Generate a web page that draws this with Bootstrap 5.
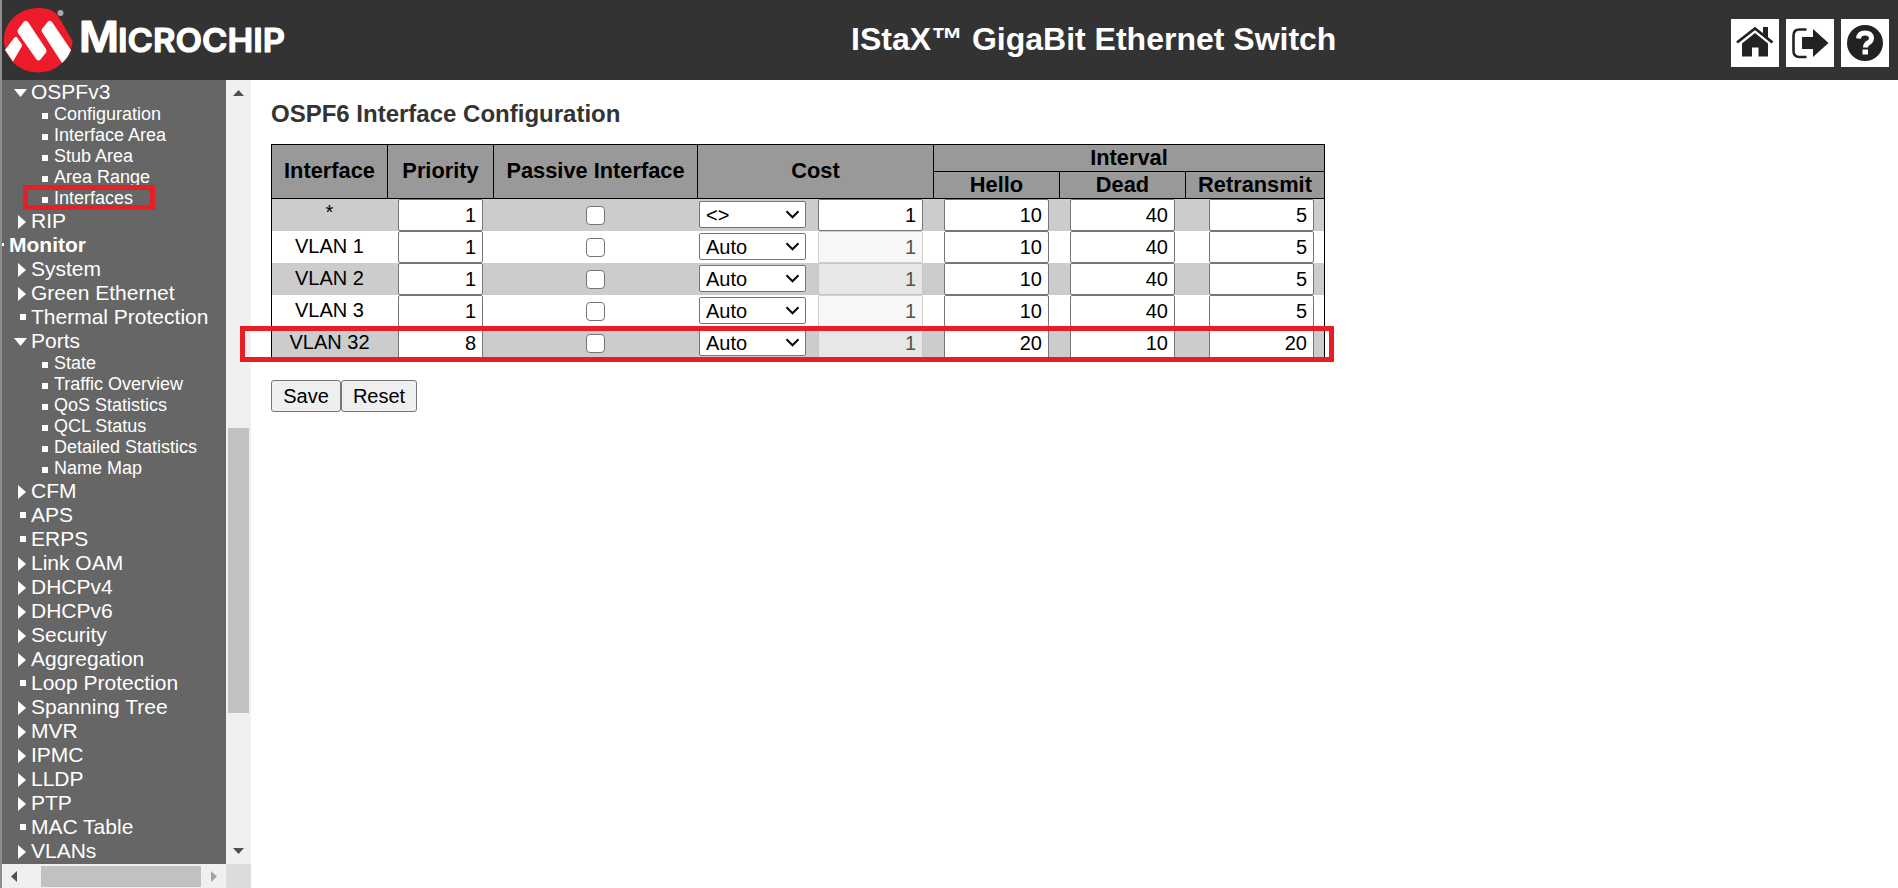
<!DOCTYPE html>
<html lang="en">
<head>
<meta charset="utf-8">
<title>IStaX GigaBit Ethernet Switch</title>
<link href="https://cdn.jsdelivr.net/npm/bootstrap@5.3.0/dist/css/bootstrap.min.css" rel="stylesheet">
<style>
body{font-family:"Liberation Sans",Arial,sans-serif;background:#fff;color:#000;font-size:20px;line-height:24px;border-left:2px solid #8d8d8d}
.topbar{height:80px;background:#333;padding-right:9px}
.topbar h1{font-size:32px;line-height:36px;margin:0 auto 0 0;padding-left:564px;padding-bottom:2px}
.tool{width:48px;height:48px;background:#fff;margin-top:6px}
.side{width:224px}
.menu{height:784px;background:#666;color:#fff;font-size:21px;line-height:24px}
.menu li{height:24px;white-space:nowrap;padding-left:29px;position:relative}
.menu li.top{padding-left:7px}
.menu li.sub{height:21px;line-height:21px;font-size:18px;padding-left:52px}
.menu li::before{content:"";position:absolute;background:#fff}
.menu li.more::before{left:16px;top:6px;width:8px;height:14px;clip-path:polygon(0 0,100% 50%,0 100%)}
.menu li.open::before{left:12px;top:9px;width:13px;height:8px;clip-path:polygon(0 0,100% 0,50% 100%)}
.menu li.leaf::before{left:18px;top:9px;width:6px;height:6px}
.menu li.sub::before{left:40px;top:9px;width:6px;height:6px}
.menu li.top::before{left:0;top:10px;width:2px;height:3px}
.track{background:#f0f0f0}
.thumb{background:#c1c1c1}
.vbar{width:25px}
.hbar{height:24px}
.corner{height:24px;background:#dcdcdc}
.mark-box{position:absolute;border:5px solid #e81e25;pointer-events:none;z-index:2}
.page{padding:19px 0 0 20px}
.page h2{font-size:24px;line-height:30px;color:#333;margin:0 0 15px}
.ospf{width:1054px;table-layout:fixed;border-collapse:separate;border-spacing:0}
.ospf th{background:#999;border:0 solid #000;border-width:1px 0 0 1px;padding:0;text-align:center;font-size:21.8px;line-height:26px;height:27px}
.ospf thead th.low{border-bottom-width:1px;height:28px}
.ospf th[rowspan]{padding-bottom:2px}
.ospf th.last{border-right-width:1px}
.ospf td{height:32px;padding:0;line-height:0;vertical-align:middle;position:relative}
.ospf tbody tr:nth-child(odd){background:#ccc}
.ospf td:first-child{border-left:1px solid #000;text-align:center;line-height:30px;padding-bottom:2px}
.ospf td.any{line-height:26px;padding-bottom:6px}
.ospf td:last-child{border-right:1px solid #000}
.ospf .pad,.ospf td:last-child.pad{padding-right:10px}
.num{width:105px;height:32px;border:1px solid #767676;border-radius:2px;background:#fff;color:#000;text-align:right;padding:0 6px 0 2px;font-size:20px;line-height:24px}
.num.short{width:85px}
.num:disabled{background:rgba(243,243,243,.69);border-color:rgba(118,118,118,.3);color:#545454}
.pick.form-select{width:107px;height:27px;margin-left:2px;margin-bottom:1px;border:1px solid #767676;border-radius:2px;color:#000;font-size:20px;line-height:24px;padding:0 0 0 6px;background:#fff url("data:image/svg+xml,%3Csvg xmlns='http://www.w3.org/2000/svg' width='15' height='9'%3E%3Cpath d='M1.5 1.3l6 6 6-6' fill='none' stroke='%23111' stroke-width='2.2'/%3E%3C/svg%3E") no-repeat 85px 8px;background-size:15px 9px}
.tick.form-check-input{width:19px;height:19px;border:1px solid #767676;border-radius:4px;margin:0}
.act{height:32px;border:1px solid #767676;border-radius:3px;background:#efefef;color:#000;font-size:20px;line-height:28px;padding:0}
</style>
</head>
<body class="vh-100 overflow-hidden d-flex flex-column">
<header class="topbar d-flex align-items-center text-white flex-shrink-0">
  <svg width="285" height="80" viewBox="2 0 285 80" class="flex-shrink-0" role="img" aria-label="Microchip">
    <path d="M38 8C47 8 54 10 58 16L72 40C73.500 43 71.500 46 71 49C65 64 53 72.500 38 72.500C19 72.500 4 58 4 40C4 22 19 8 38 8Z" fill="#ee1c2b"/>
    <path d="M14 38q2-2 3.500 0l4 6q1 1 0 3l-8.500 14.500l-8-11.500z" fill="#fff"/>
    <path d="M24 21.500q2-1.500 4 .5l18 27q1 2 0 3.500l-5.500 7q-2 2-4 0L18 33q-1-2 0-3.500z" fill="#fff"/>
    <path d="M48 21.500q2-1.500 4 .5L71 50q-3 8-9 13L42 32q-1-2 0-3z" fill="#fff"/>
    <circle cx="60.500" cy="13" r="3" fill="#aaa"/>
    <g fill="#fff" stroke="#fff" stroke-width="1.200" stroke-linejoin="round" font-family="Inter, sans-serif" font-weight="600">
      <text x="79" y="51.500" font-size="43" textLength="40" lengthAdjust="spacingAndGlyphs">M</text>
      <text x="118" y="51.500" font-size="33" textLength="167" lengthAdjust="spacingAndGlyphs">ICROCHIP</text>
    </g>
  </svg>
  <h1 class="fw-bold text-nowrap">IStaX™ GigaBit Ethernet Switch</h1>
  <div class="d-flex" style="gap:7px">
    <div class="tool"><svg width="48" height="48" fill="#222"><path d="M32 8h5v11L32 14.500z"/><path d="M6 23.500L24 9.500l17.500 14" fill="none" stroke="#222" stroke-width="2.800"/><path d="M24 14l13 10.500V37.500h-9.500V28.500h-6.500v9H11V24.500z"/></svg></div>
    <div class="tool"><svg width="48" height="48" fill="#222"><path d="M20.500 10.500H13.500q-6 0-6 6v15.500q0 6 6 6h7" fill="none" stroke="#222" stroke-width="2.600"/><path d="M16 18h11v-8l15.500 14L27 38v-8H16z"/></svg></div>
    <div class="tool"><svg width="48" height="48"><circle cx="24" cy="24" r="18" fill="#222"/><path d="M17.500 19.500q.5-5.500 6.500-5.500t6.500 5q0 3-3 4.800-3 1.700-3 4.700" fill="none" stroke="#fff" stroke-width="5"/><path d="M21.500 30.500h5.500v5h-5.500z" fill="#fff"/></svg></div>
  </div>
</header>
<div class="d-flex flex-grow-1 overflow-hidden">
  <nav class="side flex-shrink-0">
    <div class="menu overflow-hidden">
      <ul class="list-unstyled mb-0">
        <li class="open">OSPFv3</li>
        <li class="sub">Configuration</li>
        <li class="sub">Interface Area</li>
        <li class="sub">Stub Area</li>
        <li class="sub">Area Range</li>
        <li class="sub">Interfaces<span class="mark-box" style="left:21px;top:-3px;width:132px;height:25px"></span></li>
        <li class="more">RIP</li>
        <li class="top fw-bold">Monitor</li>
        <li class="more">System</li>
        <li class="more">Green Ethernet</li>
        <li class="leaf">Thermal Protection</li>
        <li class="open">Ports</li>
        <li class="sub">State</li>
        <li class="sub">Traffic Overview</li>
        <li class="sub">QoS Statistics</li>
        <li class="sub">QCL Status</li>
        <li class="sub">Detailed Statistics</li>
        <li class="sub">Name Map</li>
        <li class="more">CFM</li>
        <li class="leaf">APS</li>
        <li class="leaf">ERPS</li>
        <li class="more">Link OAM</li>
        <li class="more">DHCPv4</li>
        <li class="more">DHCPv6</li>
        <li class="more">Security</li>
        <li class="more">Aggregation</li>
        <li class="leaf">Loop Protection</li>
        <li class="more">Spanning Tree</li>
        <li class="more">MVR</li>
        <li class="more">IPMC</li>
        <li class="more">LLDP</li>
        <li class="more">PTP</li>
        <li class="leaf">MAC Table</li>
        <li class="more">VLANs</li>
      </ul>
    </div>
    <div class="hbar track d-flex align-items-center">
      <svg width="39" height="24"><path d="M15 7v11L9 12.500z" fill="#505050"/></svg>
      <div class="thumb" style="width:160px;height:21px"></div>
      <svg width="25" height="24"><path d="M10 7v11l6-5.500z" fill="#a3a3a3"/></svg>
    </div>
  </nav>
  <div class="vbar track d-flex flex-column align-items-center flex-shrink-0">
    <svg width="25" height="25" class="flex-shrink-0"><path d="M7 16h11l-5.500-6z" fill="#505050"/></svg>
    <div class="thumb" style="width:21px;height:285px;margin-top:323px"></div>
    <svg width="25" height="25" class="mt-auto flex-shrink-0"><path d="M7 9h11l-5.500 6z" fill="#505050"/></svg>
    <div class="corner w-100 flex-shrink-0"></div>
  </div>
  <main class="page flex-grow-1">
    <h2 class="fw-bold">OSPF6 Interface Configuration</h2>
    <table class="ospf">
      <colgroup><col style="width:116px"><col style="width:106px"><col style="width:204px"><col style="width:236px"><col style="width:126px"><col style="width:126px"><col style="width:140px"></colgroup>
      <thead>
        <tr><th rowspan="2" class="low">Interface</th><th rowspan="2" class="low">Priority</th><th rowspan="2" class="low">Passive Interface</th><th rowspan="2" class="low">Cost</th><th colspan="3" class="last">Interval</th></tr>
        <tr><th class="low">Hello</th><th class="low">Dead</th><th class="low last">Retransmit</th></tr>
      </thead>
      <tbody>
        <tr><td class="any">*</td><td class="text-end pad"><input class="num short" value="1"></td><td class="text-center"><input type="checkbox" class="form-check-input tick"></td>
          <td class="pad"><div class="d-flex align-items-center justify-content-end"><select class="form-select pick me-auto"><option>&lt;&gt;</option></select><input class="num" value="1"></div></td>
          <td class="text-end pad"><input class="num" value="10"></td><td class="text-end pad"><input class="num" value="40"></td><td class="text-end pad"><input class="num" value="5"></td></tr>
        <tr><td>VLAN 1</td><td class="text-end pad"><input class="num short" value="1"></td><td class="text-center"><input type="checkbox" class="form-check-input tick"></td>
          <td class="pad"><div class="d-flex align-items-center justify-content-end"><select class="form-select pick me-auto"><option>Auto</option></select><input class="num" value="1" disabled></div></td>
          <td class="text-end pad"><input class="num" value="10"></td><td class="text-end pad"><input class="num" value="40"></td><td class="text-end pad"><input class="num" value="5"></td></tr>
        <tr><td>VLAN 2</td><td class="text-end pad"><input class="num short" value="1"></td><td class="text-center"><input type="checkbox" class="form-check-input tick"></td>
          <td class="pad"><div class="d-flex align-items-center justify-content-end"><select class="form-select pick me-auto"><option>Auto</option></select><input class="num" value="1" disabled></div></td>
          <td class="text-end pad"><input class="num" value="10"></td><td class="text-end pad"><input class="num" value="40"></td><td class="text-end pad"><input class="num" value="5"></td></tr>
        <tr><td>VLAN 3</td><td class="text-end pad"><input class="num short" value="1"></td><td class="text-center"><input type="checkbox" class="form-check-input tick"></td>
          <td class="pad"><div class="d-flex align-items-center justify-content-end"><select class="form-select pick me-auto"><option>Auto</option></select><input class="num" value="1" disabled></div></td>
          <td class="text-end pad"><input class="num" value="10"></td><td class="text-end pad"><input class="num" value="40"></td><td class="text-end pad"><input class="num" value="5"></td></tr>
        <tr><td>VLAN 32<span class="mark-box" style="left:-32px;top:-1px;width:1094px;height:36px"></span></td><td class="text-end pad"><input class="num short" value="8"></td><td class="text-center"><input type="checkbox" class="form-check-input tick"></td>
          <td class="pad"><div class="d-flex align-items-center justify-content-end"><select class="form-select pick me-auto"><option>Auto</option></select><input class="num" value="1" disabled></div></td>
          <td class="text-end pad"><input class="num" value="20"></td><td class="text-end pad"><input class="num" value="10"></td><td class="text-end pad"><input class="num" value="20"></td></tr>
      </tbody>
    </table>
    <div class="d-flex" style="margin-top:21px"><button class="act" style="width:70px">Save</button><button class="act" style="width:76px">Reset</button></div>
  </main>
</div>
<script src="https://cdn.jsdelivr.net/npm/bootstrap@5.3.0/dist/js/bootstrap.bundle.min.js"></script>
</body>
</html>
